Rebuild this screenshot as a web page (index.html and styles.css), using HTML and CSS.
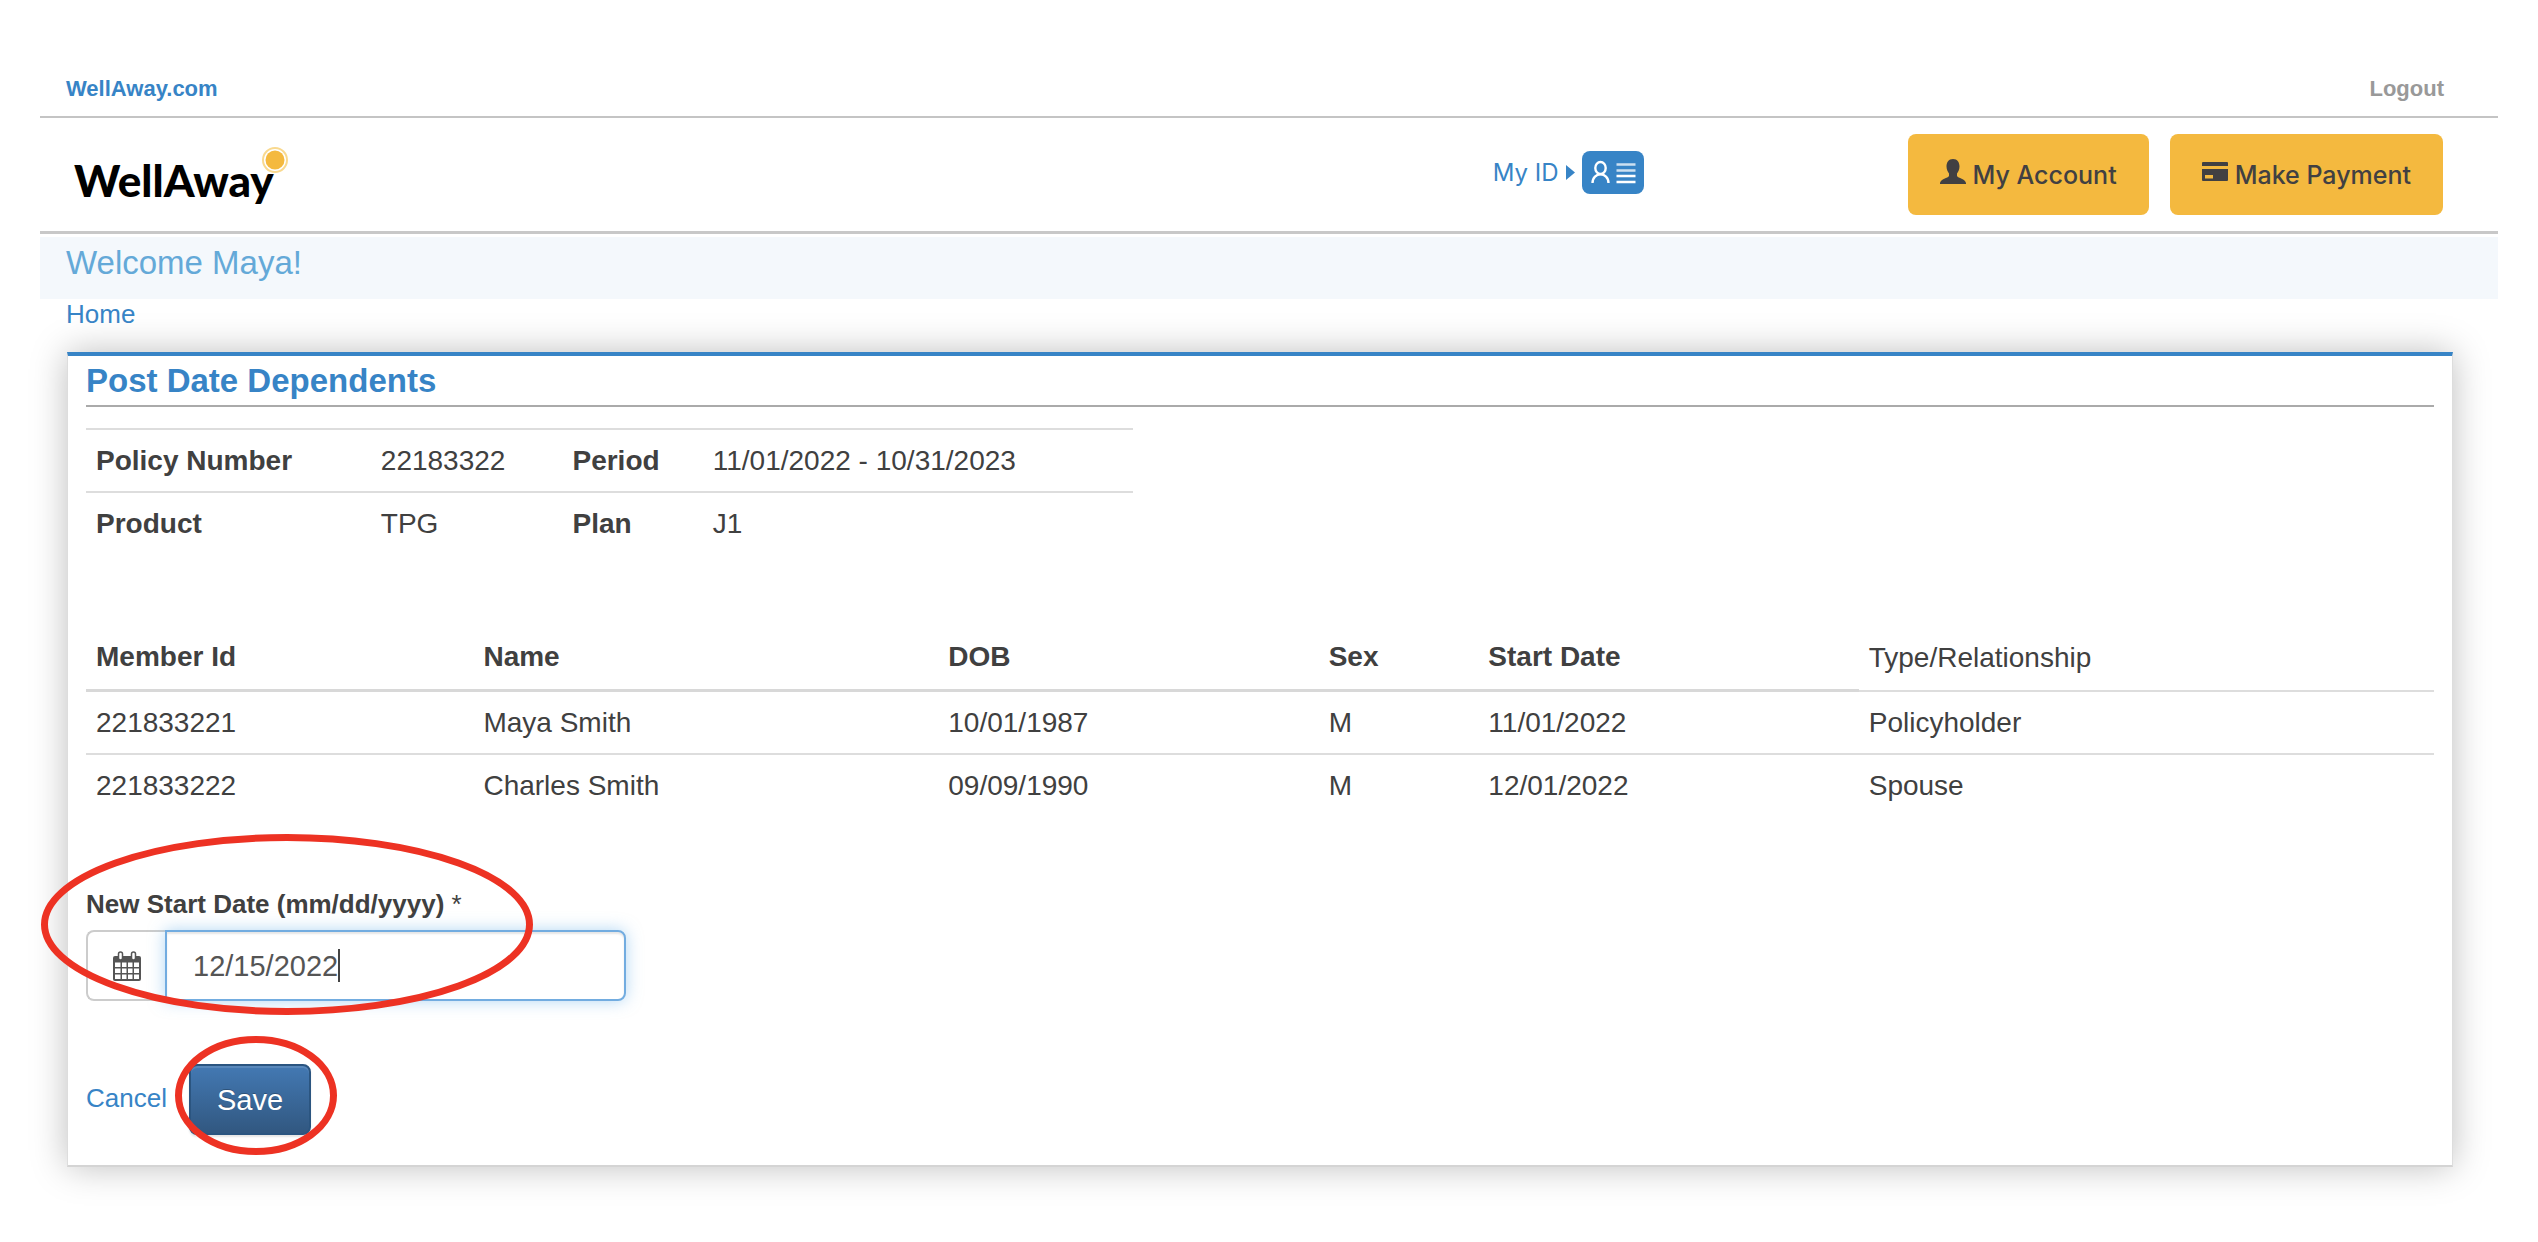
FILE: index.html
```html
<!DOCTYPE html>
<html lang="en">
<head>
<meta charset="utf-8">
<title>WellAway - Post Date Dependents</title>
<link rel="stylesheet" href="styles.css">
</head>
<body>
<div class="page">
  <header>
    <div class="topbar">
      <a class="site-link" href="#">WellAway.com</a>
      <a class="logout" href="#">Logout</a>
    </div>
    <div class="masthead">
      <a class="logo" href="#">WellAway<svg class="sun" viewBox="0 0 26 26" aria-hidden="true"><circle cx="13" cy="13" r="12" fill="none" stroke="#f9d98f" stroke-width="2"/><circle cx="13" cy="13" r="9.5" fill="#f4b93f"/></svg></a>
      <a class="my-id" href="#"><span>My ID</span>
        <svg class="caret-right" viewBox="0 0 9 15" aria-hidden="true"><path d="M0 0L9 7.5L0 15Z" fill="#3784c6"/></svg>
        <svg class="id-card" viewBox="0 0 62 43" aria-hidden="true"><rect width="62" height="43" rx="8" fill="#3784c6"/><g fill="none" stroke="#fff" stroke-width="2.4"><ellipse cx="18.5" cy="17" rx="5.2" ry="6"/><path d="M10.5 32C10.5 20.5 26.5 20.5 26.5 32"/><path d="M34.500 13.500H53.500M34.500 19.500H53.500" opacity=".75"/><path d="M34.500 25H53.500M34.500 31H53.500"/></g></svg>
      </a>
      <nav class="actions">
        <button type="button" class="btn-action"><svg viewBox="0 0 26 26" aria-hidden="true"><path d="M13 0C17.500 0 19.500 3.500 19.500 7.500C19.500 11 18 13 17 14.500V17C18 19 25.500 20 26 24V25H0V24C0.500 20 8 19 9 17V14.500C8 13 6.500 11 6.500 7.500C6.500 3.500 8.500 0 13 0Z" fill="#414042"/></svg>My Account</button>
        <button type="button" class="btn-action"><svg viewBox="0 0 26 26" aria-hidden="true"><path d="M1 3H25Q26 3 26 4V7H0V4Q0 3 1 3ZM0 10H26V21Q26 22 25 22H1Q0 22 0 21ZM3 16V19.500H11V16Z" fill="#414042" fill-rule="evenodd"/></svg>Make Payment</button>
      </nav>
    </div>
  </header>
  <p class="welcome">Welcome Maya!</p>
  <nav class="crumbs"><a href="#">Home</a></nav>
  <main class="panel">
    <h1>Post Date Dependents</h1>
    <table class="policy">
      <colgroup><col class="p-label"><col class="p-value"><col class="p-label2"><col></colgroup>
      <tbody>
        <tr><th scope="row">Policy Number</th><td>22183322</td><th scope="row">Period</th><td>11/01/2022 - 10/31/2023</td></tr>
        <tr><th scope="row">Product</th><td>TPG</td><th scope="row">Plan</th><td>J1</td></tr>
      </tbody>
    </table>
    <table class="members">
      <colgroup><col class="m-id"><col class="m-name"><col class="m-dob"><col class="m-sex"><col class="m-start"><col></colgroup>
      <thead>
        <tr><th>Member Id</th><th>Name</th><th>DOB</th><th>Sex</th><th>Start Date</th><td>Type/Relationship</td></tr>
      </thead>
      <tbody>
        <tr><td>221833221</td><td>Maya Smith</td><td>10/01/1987</td><td>M</td><td>11/01/2022</td><td>Policyholder</td></tr>
        <tr><td>221833222</td><td>Charles Smith</td><td>09/09/1990</td><td>M</td><td>12/01/2022</td><td>Spouse</td></tr>
      </tbody>
    </table>
    <form>
      <div class="field">
        <label for="start-date"><b>New Start Date (mm/dd/yyyy)</b> *</label>
        <div class="input-group">
          <span class="addon"><svg viewBox="0 0 28 30" aria-hidden="true"><path d="M2 5H26Q28 5 28 7V28Q28 30 26 30H2Q0 30 0 28V7Q0 5 2 5Z" fill="#555"/><path d="M2 11.500H7.500V16H2ZM9 11.500H13.500V16H9ZM15 11.500H19.500V16H15ZM21 11.500H26V16H21ZM2 17.500H7.500V22H2ZM9 17.500H13.500V22H9ZM15 17.500H19.500V22H15ZM21 17.500H26V22H21ZM2 23.500H7.500V28H2ZM9 23.500H13.500V28H9ZM15 23.500H19.500V28H15ZM21 23.500H26V28H21Z" fill="#fff"/><rect x="5.500" y="1" width="4" height="8" rx="2" fill="#fff" stroke="#555" stroke-width="1.500"/><rect x="18.500" y="1" width="4" height="8" rx="2" fill="#fff" stroke="#555" stroke-width="1.500"/></svg></span>
          <input id="start-date" type="text" value="12/15/2022">
          <span class="text-caret"></span>
        </div>
        <svg class="mark mark-date" viewBox="0 0 492 181" aria-hidden="true"><ellipse cx="246" cy="90.500" rx="242.500" ry="87"/></svg>
      </div>
      <div class="buttons">
        <a href="#">Cancel</a>
        <button type="submit" class="save">Save</button>
        <svg class="mark mark-save" viewBox="0 0 162 119" aria-hidden="true"><ellipse cx="81" cy="59.500" rx="77.500" ry="56"/></svg>
      </div>
    </form>
  </main>
</div>
</body>
</html>
```
FILE: styles.css
```css
* { box-sizing: border-box; }

body {
  margin: 0;
  background: #fff;
  color: #404040;
  font: 28px/40px "Liberation Sans", Arial, sans-serif;
}

a { color: #3784c6; text-decoration: none; }
button, input { font: inherit; color: inherit; }

.page { padding: 60px 40px 74px; }

.topbar {
  display: flex;
  justify-content: space-between;
  padding: 12px 54px 10px 26px;
  border-bottom: 2px solid #c4c4c4;
  font-size: 22px;
  line-height: 34px;
  font-weight: bold;
}
.topbar .logout { color: #999; }

.masthead {
  display: flex;
  align-items: center;
  padding: 16px 55px 16px 34px;
  border-bottom: 3px solid #c8c8c8;
}

.logo {
  position: relative;
  margin-right: auto;
  padding-top: 10px;
  color: #000;
  font: 900 44px/60px Lato, sans-serif;
}
.sun {
  position: absolute;
  left: 188px;
  top: 7px;
  width: 26px;
  height: 26px;
}

.my-id {
  display: flex;
  align-items: center;
  gap: 7px;
  margin-right: 264px;
  padding-bottom: 4px;
  font: 24px/40px Inter, sans-serif;
}
.caret-right { width: 9px; height: 15px; }
.id-card { width: 62px; height: 43px; }

.actions { display: flex; gap: 21px; }
.btn-action {
  display: flex;
  align-items: center;
  gap: 7px;
  height: 81px;
  padding: 0 32px;
  border: 0;
  border-radius: 8px;
  background: #f4b93f;
  color: #414042;
  font: 500 25px/40px Inter, sans-serif;
}
.btn-action svg { width: 26px; height: 26px; margin-bottom: 5px; }

.welcome {
  margin: 3px 0 0;
  padding: 6px 26px 16px;
  background: #f4f8fc;
  color: #64a9d8;
  font-size: 33px;
}

.crumbs {
  padding: 0 26px;
  font-size: 26px;
  line-height: 30px;
}

.panel {
  margin: 23px 45px 0 27px;
  padding: 6px 18px 30px;
  border: 1px solid #ddd;
  border-top: 4px solid #3784c6;
  border-bottom: 2px solid #d4d4d4;
  box-shadow: 0 0 34px rgba(0, 0, 0, .26);
  background: #fff;
}

h1 {
  margin: 0 0 21px;
  padding-bottom: 5px;
  border-bottom: 2px solid #aaa;
  color: #3784c6;
  font-size: 33px;
  line-height: 38px;
}

table {
  border-collapse: separate;
  border-spacing: 0;
  table-layout: fixed;
  line-height: 41px;
}
th, td { padding: 10px; text-align: left; }

.policy { width: 44.6%; }
.policy td, .policy th { border-top: 2px solid #ddd; }
.p-label { width: 27.2%; }
.p-value { width: 18.3%; }
.p-label2 { width: 13.4%; }

.members { width: 100%; margin-top: 72px; }
.members thead th, .members thead td { padding-bottom: 12px; }
.members thead th { border-bottom: 3px solid #d8d8d8; }
.members thead td, .members tbody tr:first-child td { border-bottom: 2px solid #ddd; }
.m-id { width: 16.5%; }
.m-name { width: 19.8%; }
.m-dob { width: 16.2%; }
.m-sex { width: 6.8%; }
.m-start { width: 16.2%; }

.field { position: relative; margin-top: 68px; }
.field label { display: block; font-size: 26px; line-height: 40px; }

.input-group {
  position: relative;
  display: flex;
  width: 540px;
  height: 71px;
  margin-top: 6px;
}
.addon {
  display: flex;
  align-items: center;
  justify-content: center;
  width: 79px;
  border: 2px solid #ccc;
  border-right: 0;
  border-radius: 8px 0 0 8px;
}
.addon svg { width: 28px; height: 30px; }
.input-group input {
  flex: 1;
  min-width: 0;
  padding: 0 26px;
  border: 2px solid #72ace0;
  border-radius: 0 8px 8px 0;
  outline: 0;
  box-shadow: inset 0 2px 2px rgba(0, 0, 0, .1), 0 0 16px rgba(102, 175, 233, .5);
  color: #555;
  font-size: 29px;
}
.text-caret {
  position: absolute;
  left: 252px;
  top: 19px;
  width: 2px;
  height: 33px;
  background: #444;
}

.buttons {
  position: relative;
  display: flex;
  align-items: center;
  gap: 22px;
  margin-top: 63px;
  font-size: 26px;
}
.buttons a { padding-bottom: 4px; }
.save {
  height: 71px;
  padding: 0 26px;
  border: 2px solid #2b5580;
  border-radius: 8px;
  background: linear-gradient(#4379b3, #315780);
  box-shadow: inset 0 2px 0 rgba(255, 255, 255, .12), 0 2px 2px rgba(0, 0, 0, .1);
  color: #fff;
  font-size: 29px;
  text-shadow: 0 -1px 0 rgba(0, 0, 0, .25);
}

/* red highlight rings over the form */
.mark {
  position: absolute;
  fill: none;
  stroke: #ed3223;
  stroke-width: 7;
  pointer-events: none;
}
.mark-date { left: -45px; top: -50px; width: 492px; height: 181px; }
.mark-save { left: 89px; top: -28px; width: 162px; height: 119px; }
```
